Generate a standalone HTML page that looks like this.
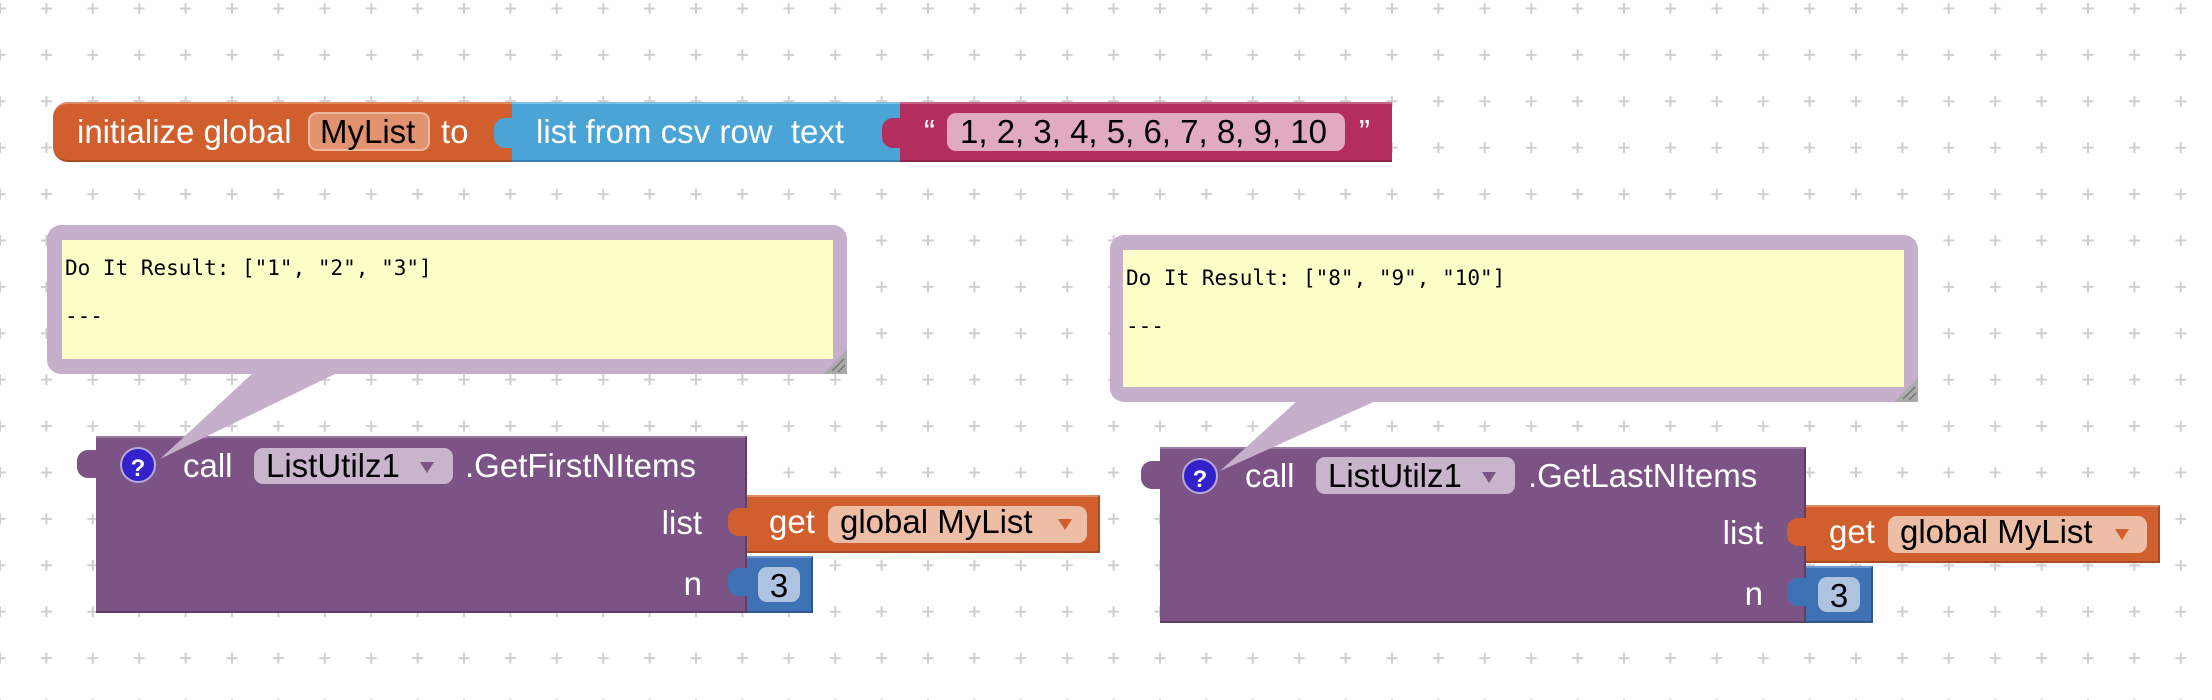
<!DOCTYPE html>
<html><head><meta charset="utf-8"><style>
html,body{margin:0;padding:0;width:2212px;height:700px;overflow:hidden;background:#fff}
.a{position:absolute;box-sizing:border-box}
.t{position:absolute;font-family:"Liberation Sans",Arial,sans-serif;font-size:33px;line-height:33px;white-space:pre;color:#fff}
.k{color:#000}
.m{position:absolute;font-family:"DejaVu Sans Mono","Liberation Mono",monospace;font-size:21px;line-height:24px;white-space:pre;color:#000}
.or{background:#D05F2D;border-top:2px solid #E08B66;border-bottom:2px solid #A94B22}
.bl{background:#4AA4D6;border-top:2px solid #80C0E4;border-bottom:2px solid #3883AD}
.mg{background:#B32D5E;border-top:2px solid #C9638A;border-bottom:2px solid #8E2249}
.pu{background:#7C5385;border-top:2px solid #9A7CA2;border-bottom:2px solid #5F3E66;border-right:2px solid #5F3E66}
.nb{background:#3F71B5;border-top:2px solid #6F96CB;border-bottom:2px solid #2F5890;border-right:2px solid #2F5890}
.pill{position:absolute;border-radius:9px}
.tri{position:absolute;width:0;height:0;border-left:7px solid transparent;border-right:7px solid transparent}
</style></head><body>
<svg class="a" style="left:0;top:0" width="2212" height="700">
<defs><pattern id="g" x="0" y="8.5" width="46.4" height="46.4" patternUnits="userSpaceOnUse">
<path d="M0 -5.5V5.5M-5.5 0H5.5M46.4 -5.5V5.5M40.9 0H51.9M0 40.9V51.9M-5.5 46.4H5.5M46.4 40.9V51.9M40.9 46.4H51.9" stroke="#cfcfcf" stroke-width="2"/></pattern></defs>
<rect x="0" y="0" width="2212" height="700" fill="url(#g)"/>
<rect x="47" y="225" width="800" height="149" rx="14" fill="#C5AFCB"/>
<rect x="62" y="240" width="771" height="119" fill="#FEFEC9"/>
<path d="M847 350 V374 H823 Z" fill="#aaa"/>
<path d="M832 371 L844 359 M838 372 L845 365" stroke="#777" stroke-width="1.5"/>
<rect x="1110" y="235" width="808" height="167" rx="14" fill="#C5AFCB"/>
<rect x="1123" y="250" width="781" height="137" fill="#FEFEC9"/>
<path d="M1918 378 V402 H1894 Z" fill="#aaa"/>
<path d="M1903 399 L1915 387 M1909 400 L1916 393" stroke="#777" stroke-width="1.5"/>
</svg>
<div class="m" style="left:65px;top:256px">Do It Result: ["1", "2", "3"]

---</div>
<div class="m" style="left:1126px;top:266px">Do It Result: ["8", "9", "10"]

---</div>

<!-- top init block -->
<div class="a or" style="left:53px;top:102px;width:462px;height:60px;border-radius:15px 0 0 15px"></div>
<div class="t" style="left:77px;top:115px">initialize global</div>
<div class="pill" style="left:308px;top:112px;width:122px;height:39px;background:#E2926F;border:2px solid #EDB9A0;box-sizing:border-box"></div>
<div class="t k" style="left:320px;top:115px">MyList</div>
<div class="t" style="left:441px;top:115px">to</div>
<div class="a bl" style="left:512px;top:102px;width:390px;height:60px"></div>
<div class="a" style="left:494px;top:118px;width:22px;height:30px;background:#4AA4D6;border-radius:11px 0 0 11px"></div>
<div class="t" style="left:536px;top:115px">list from csv row  text</div>
<div class="a mg" style="left:900px;top:102px;width:492px;height:60px"></div>
<div class="a" style="left:882px;top:118px;width:22px;height:30px;background:#B32D5E;border-radius:11px 0 0 11px"></div>
<div class="t" style="left:924px;top:115px">“</div>
<div class="pill" style="left:947px;top:113px;width:398px;height:38px;background:#E0ABC0"></div>
<div class="t k" style="left:960px;top:115px">1, 2, 3, 4, 5, 6, 7, 8, 9, 10</div>
<div class="t" style="left:1359px;top:115px">”</div>

<!-- left call block -->
<div class="a pu" style="left:96px;top:436px;width:651px;height:177px"></div>
<div class="a" style="left:77px;top:450px;width:22px;height:28px;background:#7C5385;border-radius:11px 0 0 11px"></div>
<div class="a" style="left:120px;top:447px;width:36px;height:36px;border-radius:50%;background:#3322CC;border:2px solid #B8A8D8"></div>
<div class="t" style="left:128px;top:452px;width:20px;text-align:center;font-size:24px;font-weight:bold">?</div>
<div class="t" style="left:183px;top:449px">call</div>
<div class="pill" style="left:254px;top:448px;width:199px;height:36px;background:#C8B5CC"></div>
<div class="t k" style="left:266px;top:449px">ListUtilz1</div>
<div class="tri" style="left:420px;top:462px;border-top:11px solid #7C5385"></div>
<div class="t" style="left:465px;top:449px">.GetFirstNItems</div>
<div class="t" style="left:642px;top:506px;width:60px;text-align:right">list</div>
<div class="t" style="left:642px;top:567px;width:60px;text-align:right">n</div>
<div class="a or" style="left:747px;top:495px;width:353px;height:58px;border-right:2px solid #A94B22"></div>
<div class="a" style="left:728px;top:508px;width:22px;height:28px;background:#D05F2D;border-radius:11px 0 0 11px"></div>
<div class="t" style="left:769px;top:505px">get</div>
<div class="pill" style="left:828px;top:506px;width:259px;height:37px;background:#EDBDA6"></div>
<div class="t k" style="left:840px;top:505px">global MyList</div>
<div class="tri" style="left:1058px;top:519px;border-top:11px solid #D05F2D"></div>
<div class="a nb" style="left:747px;top:556px;width:66px;height:57px"></div>
<div class="a" style="left:728px;top:568px;width:22px;height:28px;background:#3F71B5;border-radius:11px 0 0 11px"></div>
<div class="pill" style="left:758px;top:567px;width:42px;height:35px;background:#AEC3E0"></div>
<div class="t k" style="left:758px;top:569px;width:42px;text-align:center">3</div>

<!-- right call block -->
<div class="a pu" style="left:1160px;top:447px;width:646px;height:176px"></div>
<div class="a" style="left:1141px;top:461px;width:22px;height:28px;background:#7C5385;border-radius:11px 0 0 11px"></div>
<div class="a" style="left:1182px;top:458px;width:36px;height:36px;border-radius:50%;background:#3322CC;border:2px solid #B8A8D8"></div>
<div class="t" style="left:1190px;top:463px;width:20px;text-align:center;font-size:24px;font-weight:bold">?</div>
<div class="t" style="left:1245px;top:459px">call</div>
<div class="pill" style="left:1316px;top:457px;width:199px;height:37px;background:#C8B5CC"></div>
<div class="t k" style="left:1328px;top:459px">ListUtilz1</div>
<div class="tri" style="left:1482px;top:472px;border-top:11px solid #7C5385"></div>
<div class="t" style="left:1528px;top:459px">.GetLastNItems</div>
<div class="t" style="left:1703px;top:516px;width:60px;text-align:right">list</div>
<div class="t" style="left:1703px;top:577px;width:60px;text-align:right">n</div>
<div class="a or" style="left:1806px;top:505px;width:354px;height:58px;border-right:2px solid #A94B22"></div>
<div class="a" style="left:1787px;top:518px;width:22px;height:28px;background:#D05F2D;border-radius:11px 0 0 11px"></div>
<div class="t" style="left:1829px;top:515px">get</div>
<div class="pill" style="left:1888px;top:516px;width:259px;height:37px;background:#EDBDA6"></div>
<div class="t k" style="left:1900px;top:515px">global MyList</div>
<div class="tri" style="left:2115px;top:529px;border-top:11px solid #D05F2D"></div>
<div class="a nb" style="left:1806px;top:566px;width:67px;height:57px"></div>
<div class="a" style="left:1787px;top:578px;width:22px;height:28px;background:#3F71B5;border-radius:11px 0 0 11px"></div>
<div class="pill" style="left:1818px;top:577px;width:42px;height:35px;background:#AEC3E0"></div>
<div class="t k" style="left:1818px;top:579px;width:42px;text-align:center">3</div>

<!-- bubble tails over blocks -->
<svg class="a" style="left:0;top:0" width="2212" height="700">
<polygon points="254,372 339,372 160,459" fill="#C5AFCB"/>
<polygon points="1298,400 1378,400 1220,471" fill="#C5AFCB"/>
</svg>
</body></html>
